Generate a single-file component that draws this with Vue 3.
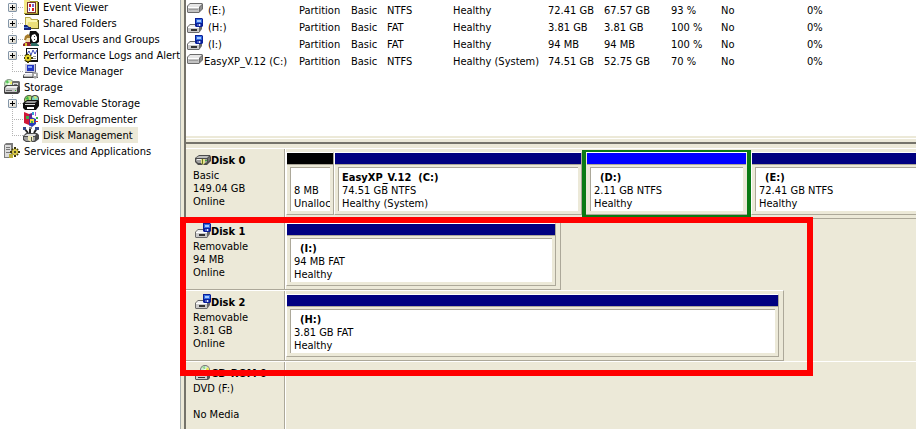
<script setup>
const tree = [
  { label: 'Event Viewer', icon: 'event', level: 1, expand: true },
  { label: 'Shared Folders', icon: 'folder', level: 1, expand: true },
  { label: 'Local Users and Groups', icon: 'users', level: 1, expand: true },
  { label: 'Performance Logs and Alerts', icon: 'perf', level: 1, expand: true },
  { label: 'Device Manager', icon: 'device', level: 1, last: true },
  { label: 'Storage', icon: 'storage', level: 0 },
  { label: 'Removable Storage', icon: 'removable', level: 1, expand: true },
  { label: 'Disk Defragmenter', icon: 'defrag', level: 1 },
  { label: 'Disk Management', icon: 'manage', level: 1, last: true, selected: true },
  { label: 'Services and Applications', icon: 'services', level: 0 },
]

const volumes = [
  { icon: 'drive', name: '(E:)', indent: true, cells: ['Partition', 'Basic', 'NTFS', 'Healthy', '72.41 GB', '67.57 GB', '93 %', 'No', '0%'] },
  { icon: 'usb', name: '(H:)', indent: true, cells: ['Partition', 'Basic', 'FAT', 'Healthy', '3.81 GB', '3.81 GB', '100 %', 'No', '0%'] },
  { icon: 'usb', name: '(I:)', indent: true, cells: ['Partition', 'Basic', 'FAT', 'Healthy', '94 MB', '94 MB', '100 %', 'No', '0%'] },
  { icon: 'drive', name: 'EasyXP_V.12 (C:)', cells: ['Partition', 'Basic', 'NTFS', 'Healthy (System)', '74.51 GB', '52.75 GB', '70 %', 'No', '0%'] },
]

const disks = [
  {
    name: 'Disk 0', icon: 'disk', lines: ['Basic', '149.04 GB', 'Online'],
    parts: [
      { width: 48, kind: 'free', name: '', lines: ['8 MB', 'Unalloc'] },
      { width: 248, name: 'EasyXP_V.12  (C:)', lines: ['74.51 GB NTFS', 'Healthy (System)'] },
      { width: 169, kind: 'logical', name: '(D:)', indent: true, lines: ['2.11 GB NTFS', 'Healthy'] },
      { name: '(E:)', indent: true, lines: ['72.41 GB NTFS', 'Healthy'] },
    ],
  },
  {
    name: 'Disk 1', icon: 'usb', width: 375, lines: ['Removable', '94 MB', 'Online'],
    parts: [{ name: '(I:)', indent: true, lines: ['94 MB FAT', 'Healthy'] }],
  },
  {
    name: 'Disk 2', icon: 'usb', width: 598, lines: ['Removable', '3.81 GB', 'Online'],
    parts: [{ name: '(H:)', indent: true, lines: ['3.81 GB FAT', 'Healthy'] }],
  },
  { name: 'CD-ROM 0', icon: 'cd', lines: ['DVD (F:)', '', 'No Media'], parts: [] },
]

const px = (n) => (n ? { width: n + 'px' } : {})
</script>

<template>
  <div class="console">
    <svg class="defs" aria-hidden="true">
      <symbol id="drive" viewBox="0 0 16 16">
        <path d="M0 5 3 2H15L16 3V8L12 12H1L0 11Z" fill="#6c6c6c" />
        <path d="M1 5 3 3H15L12 6H1Z" fill="#e6e6e6" />
        <path d="M1 6H12V11H1Z" fill="#c2c2c2" />
        <path d="M1 6H12V7H1Z" fill="#fff" />
        <path d="M13 6 15 4V8L13 10Z" fill="#8e8e8e" />
        <path d="M2 8H11V9H2Z" fill="#9c9c9c" />
      </symbol>
      <symbol id="usb" viewBox="0 0 16 16">
        <path d="M0 9 3 6H14L15 7V11L12 15H1L0 14Z" fill="#6a6a6a" />
        <path d="M1 9 3 7H13L12 9Z" fill="#eee" />
        <path d="M1 9H12V14H1Z" fill="#cacaca" />
        <path d="M1 9H12V10H1Z" fill="#fff" />
        <path d="M4 11H10V13H4Z" fill="#333" />
        <path d="M8 0H15L16 1V8L15 9H9L8 8Z" fill="#0a1f98" />
        <path d="M9 1H15V5H9Z" fill="#2f6be0" />
        <path d="M10 2H14V4H10Z" fill="#a4c6ff" />
        <path d="M10 6H14V8H10Z" fill="#4d62c4" />
        <path d="M12 6H13V8H12Z" fill="#dfe6ff" />
      </symbol>
      <symbol id="disk" viewBox="0 0 16 16">
        <path d="M0 6 4 3H15L16 5V9L12 13H3L0 10Z" fill="#4c4c4c" />
        <path d="M1 6 4 4H14L12 6Z" fill="#bdbdbd" />
        <path d="M1 7H12V10L11 11H3L1 9Z" fill="#a0a0a0" />
        <path d="M13 6 15 5V8L13 10Z" fill="#6f6f6f" />
        <path d="M2 7H6V8H2Z" fill="#eee" />
        <path d="M6 7H10V11L8 13L6 11Z" fill="#e5e28a" />
        <path d="M7 7H8V12H7Z" fill="#6a7a20" />
        <path d="M10 8H12V9H10Z" fill="#3da545" />
      </symbol>
      <symbol id="cd" viewBox="0 0 16 16">
        <circle cx="10" cy="5" r="5" fill="#777" />
        <circle cx="10" cy="5" r="4" fill="#d4ecd4" />
        <path d="M10 5 7 2 10 1Z" fill="#8fd98f" />
        <path d="M10 5 13 2 14 5Z" fill="#f0e64a" />
        <circle cx="10" cy="5" r="1" fill="#fff" />
        <path d="M0 9 3 7H14L15 8V13L13 15H1L0 14Z" fill="#555" />
        <path d="M1 10H12V14H1Z" fill="#d0d0d0" />
        <path d="M1 10 3 8H13L12 10Z" fill="#eee" />
        <path d="M3 12H10V13H3Z" fill="#333" />
      </symbol>
      <symbol id="event" viewBox="0 0 16 16">
        <path d="M1 1H6L7 2H15V15H1Z" fill="#a3952a" />
        <path d="M1 1H6L7 3H14V14H1Z" fill="#f3ea86" />
        <path d="M4 3H13V14H4Z" fill="#7a3434" />
        <path d="M5 4H12V13H5Z" fill="#fff" />
        <path d="M6 5H8V8H6Z M9 9H11V12H9Z" fill="#d82020" />
        <path d="M9 5H11V8H9Z M6 9H7V12H6Z" fill="#7a62d0" />
        <path d="M15 3H16V16H2V15H15Z" fill="#2b2810" />
      </symbol>
      <symbol id="folder" viewBox="0 0 16 16">
        <path d="M2 2H7L9 4H15V13H2Z" fill="#b9ac48" />
        <path d="M3 3H7L8 5H14V12H3Z" fill="#fbf6b4" />
        <path d="M5 7H15V13H4Z" fill="#ece07a" />
        <path d="M15 5H16V14H6V13H15Z" fill="#5c5618" />
        <path d="M1 10H4L6 12H8V15H1Z" fill="#16257c" />
        <path d="M1 12H5V13H1Z" fill="#4f86e0" />
      </symbol>
      <symbol id="users" viewBox="0 0 16 16">
        <path d="M7 0H13L16 3V11L13 13H7L6 5Z" fill="#111" />
        <path d="M9 4 12 3 14 6V9L12 11H10L8 7Z" fill="#fff" />
        <path d="M11 5H12V6H11Z M11 8H12V9H11Z" fill="#333" />
        <path d="M2 6 5 5 7 7V11L4 12L2 10Z" fill="#f0dfae" />
        <path d="M2 5 5 3 7 5V7H4L3 9H1Z" fill="#a67c2c" />
        <path d="M0 13 3 11H7L8 15H0Z" fill="#8e2433" />
        <path d="M8 12H13L16 14V15H8Z" fill="#2e6d66" />
        <path d="M2 12H4V15H2Z" fill="#d8c830" />
      </symbol>
      <symbol id="perf" viewBox="0 0 16 16">
        <path d="M3 1H15V15H3Z" fill="#111" />
        <path d="M4 2H14V13H4Z" fill="#fff" />
        <path d="M4 7 6 4 8 8 10 3 12 7 14 3" fill="none" stroke="#3a48b8" />
        <path d="M10 9H13V10H10Z M10 11H13V12H10Z" fill="#999" />
        <path d="M5 7V16M1 11H10M2 8 8 14M8 8 2 14" stroke="#4b4300" stroke-width="2" />
        <circle cx="5" cy="11" r="3" fill="#e6d62c" />
        <path d="M4 10H6V12H4Z" fill="#4b4300" />
      </symbol>
      <symbol id="device" viewBox="0 0 16 16">
        <path d="M2 1H13V10H2Z" fill="#5c5c78" />
        <path d="M2 1H12V9H2Z" fill="#c9c9dc" />
        <path d="M4 2H11V8H4Z" fill="#2236c4" />
        <path d="M5 3H9V5H5Z" fill="#86a6f8" />
        <path d="M1 11H12L15 13V15H0V13Z" fill="#444" />
        <path d="M2 11H11V12L10 13H1V12Z" fill="#e4e4e4" />
        <path d="M1 13H9V14H1Z" fill="#aaa" />
        <path d="M9 10 12 9 15 10V14L12 16L9 13Z" fill="#a6a6a6" />
        <path d="M11 11H13V13H11Z" fill="#fff" />
      </symbol>
      <symbol id="storage" viewBox="0 0 16 16">
        <circle cx="5" cy="5" r="5" fill="#8a9a8a" />
        <circle cx="5" cy="5" r="4" fill="#c8ecc0" />
        <path d="M5 5 1 3 4 1Z" fill="#58c65a" />
        <path d="M5 5 8 2 9 5Z" fill="#f2ee60" />
        <circle cx="5" cy="5" r="1" fill="#fff" />
        <path d="M8 3 9 2H15L16 3V9H8Z" fill="#6c6c6c" />
        <path d="M9 4H14V8H9Z" fill="#dadada" />
        <path d="M10 5H13V6H10Z" fill="#777" />
        <path d="M0 8 2 6H14L16 8V13L14 15H1L0 14Z" fill="#444" />
        <path d="M1 9H13V13H1Z" fill="#c4c4c4" />
        <path d="M1 9 3 7H14L13 9Z" fill="#eee" />
        <path d="M2 11H8V12H2Z" fill="#666" />
        <path d="M11 11H12V12H11Z" fill="#32b432" />
      </symbol>
      <symbol id="removable" viewBox="0 0 16 16">
        <circle cx="6" cy="5" r="5" fill="#4c5c3c" />
        <circle cx="6" cy="5" r="4" fill="#b6dc6a" />
        <circle cx="12" cy="4" r="4" fill="#444" />
        <circle cx="12" cy="4" r="3" fill="#7ed8be" />
        <path d="M6 5 2 4 5 1Z" fill="#38b04b" />
        <path d="M12 4 11 1 14 2Z" fill="#f0ea60" />
        <path d="M0 8 4 5H15L16 6V11L13 15H2L0 13Z" fill="#111" />
        <path d="M4 6H14L12 8H2Z" fill="#999" />
        <path d="M2 9H12V10H2Z" fill="#ddd" />
        <path d="M4 12H11V14H4Z" fill="#fff" />
      </symbol>
      <symbol id="defrag" viewBox="0 0 16 16">
        <path d="M1 1 6 3V14L1 12Z" fill="#d01838" />
        <path d="M6 3 9 2V12L6 15Z" fill="#6a1f8c" />
        <path d="M8 6 13 8V13L9 16L6 14Z" fill="#2a3bb8" />
        <path d="M3 5H6V8H3Z" fill="#3fae49" />
        <path d="M7 8H11V12H7Z" fill="#f0df3c" />
        <path d="M8 10H10V12H8Z" fill="#3fae49" />
        <path d="M9 1H11V4H9Z" fill="#35a0d8" />
        <path d="M12 1H13V5H12Z" fill="#b058c8" />
        <path d="M13 6H15V8H13Z" fill="#3fae49" />
        <path d="M12 10H15V11H12Z" fill="#d02a2a" />
      </symbol>
      <symbol id="manage" viewBox="0 0 16 16">
        <path d="M1 1 5 6M7 1V6M11 6 14 1" stroke="#222" stroke-width="2" />
        <path d="M0 0H3V3H0Z M12 0H16V3H12Z" fill="#33488e" />
        <path d="M6 0H9V2H6Z" fill="#888" />
        <path d="M0 9 3 6H14L16 8V12L12 15H3L0 13Z" fill="#4a4a4a" />
        <path d="M1 9 4 7H13L12 9Z" fill="#ddd" />
        <path d="M1 10H12V13L11 14H3L1 12Z" fill="#a0a0a0" />
        <path d="M5 9H10V13L8 15L5 13Z" fill="#f0ecb8" />
        <path d="M8 10H9V14H8Z" fill="#555" />
      </symbol>
      <symbol id="services" viewBox="0 0 16 16">
        <path d="M0 2 2 0H9V13L7 15H0Z" fill="#7c7c7c" />
        <path d="M1 2H7V14H1Z" fill="#dcdcdc" />
        <path d="M2 4H6V5H2Z M2 6H6V7H2Z M2 9H6V10H2Z" fill="#777" />
        <path d="M11 4V14M6 9H16M8 6 14 12M14 6 8 12" stroke="#3d3604" stroke-width="2" />
        <circle cx="11" cy="9" r="3" fill="#d9ca4a" />
        <circle cx="11" cy="9" r="1" fill="#222" />
        <path d="M5 11H9V15H5Z" fill="#b8ad3c" />
      </symbol>
    </svg>

    <nav class="tree" aria-label="Console tree">
      <ul>
        <li
          v-for="n in tree"
          :key="n.label"
          :class="['node', 'level-' + n.level, { last: n.last, selected: n.selected }]"
        >
          <span v-if="n.level" class="branch">
            <button v-if="n.expand" class="toggle" type="button" :aria-label="'Expand ' + n.label"></button>
          </span>
          <svg class="icon"><use :href="'#' + n.icon" /></svg>
          <span class="caption">{{ n.label }}</span>
        </li>
      </ul>
    </nav>

    <div class="splitter"></div>

    <main class="content">
      <section class="volumes">
        <table>
          <colgroup>
            <col class="c-name" /><col class="c-layout" /><col class="c-type" /><col class="c-fs" />
            <col class="c-status" /><col class="c-cap" /><col class="c-free" /><col class="c-pct" />
            <col class="c-fault" /><col />
          </colgroup>
          <tbody>
            <tr v-for="v in volumes" :key="v.name">
              <td>
                <span :class="['volume', { indent: v.indent }]">
                  <svg class="icon"><use :href="'#' + v.icon" /></svg>{{ v.name }}
                </span>
              </td>
              <td v-for="(c, i) in v.cells" :key="i">{{ c }}</td>
            </tr>
          </tbody>
        </table>
      </section>

      <div class="divider"></div>

      <section class="disks">
        <article
          v-for="d in disks"
          :key="d.name"
          :class="['disk', { wide: !d.width }]"
          :style="px(d.width)"
        >
          <header class="info">
            <h2><svg class="icon"><use :href="'#' + d.icon" /></svg>{{ d.name }}</h2>
            <p v-for="(l, i) in d.lines" :key="i">{{ l }}</p>
          </header>
          <div class="parts">
            <div
              v-for="p in d.parts"
              :key="p.name"
              :class="['part', p.kind, { grow: !p.width }]"
              :style="px(p.width)"
            >
              <div class="bar"></div>
              <div class="body">
                <h3 :class="{ indent: p.indent }">{{ p.name }}</h3>
                <p v-for="l in p.lines" :key="l">{{ l }}</p>
              </div>
            </div>
          </div>
        </article>
        <div class="highlight"></div>
      </section>
    </main>
  </div>
</template>

<style>
body {
  background: #ece9d8;
}
</style>

<style scoped>
.console {
  display: flex;
  height: 100vh;
  overflow: hidden;
  background: #ece9d8;
  color: #000;
  font: 11px/13px "DejaVu Sans Condensed", "DejaVu Sans", sans-serif;
}
.defs {
  position: absolute;
  width: 0;
  height: 0;
}
.icon {
  width: 16px;
  height: 16px;
  flex: none;
}
ul,
h2,
h3,
p {
  margin: 0;
  padding: 0;
  font-size: 11px;
  list-style: none;
}

.tree {
  width: 180px;
  flex: none;
  overflow: hidden;
  background: #fff;
}
.tree ul {
  margin-top: -1px;
}
.node {
  display: flex;
  align-items: center;
  height: 16px;
  padding-left: 4px;
  white-space: nowrap;
}
.level-1 {
  padding-left: 0;
}
.branch {
  display: flex;
  align-items: center;
  width: 23px;
  height: 16px;
  flex: none;
  padding-left: 8px;
  box-sizing: border-box;
  background:
    repeating-linear-gradient(90deg, #b4b4b4 0 1px, transparent 1px 2px) 12px 8px / 11px 1px no-repeat,
    repeating-linear-gradient(#b4b4b4 0 1px, transparent 1px 2px) 12px 0 / 1px 16px no-repeat;
}
.last .branch {
  background:
    repeating-linear-gradient(90deg, #b4b4b4 0 1px, transparent 1px 2px) 12px 8px / 11px 1px no-repeat,
    repeating-linear-gradient(#b4b4b4 0 1px, transparent 1px 2px) 12px 0 / 1px 8px no-repeat;
}
.toggle {
  width: 9px;
  height: 9px;
  padding: 0;
  border: 1px solid #8496a8;
  border-radius: 1px;
  background:
    linear-gradient(#000, #000) center / 5px 1px no-repeat,
    linear-gradient(#000, #000) center / 1px 5px no-repeat,
    linear-gradient(135deg, #fff, #d4d0c4);
}
.caption {
  margin-left: 3px;
  padding: 2px 5px 0 1px;
  line-height: 14px;
}
.level-0 .caption {
  margin-left: 2px;
  padding-left: 2px;
}
.selected .caption {
  background: #ece9d8;
}

.splitter {
  width: 3px;
  flex: none;
  border-left: 1px solid #a9b0b0;
  border-right: 2px solid #75736a;
  background: #ece9d8;
}

.content {
  display: flex;
  flex-direction: column;
  flex: 1;
  min-width: 0;
}
.volumes {
  height: 136px;
  flex: none;
  box-sizing: border-box;
  padding-top: 1px;
  overflow: hidden;
  background: #fff;
}
table {
  width: 100%;
  table-layout: fixed;
  border-collapse: collapse;
}
td {
  box-sizing: border-box;
  height: 17px;
  padding: 2px 0 0;
  white-space: nowrap;
}
.c-name { width: 113px; }
.c-layout { width: 52px; }
.c-type { width: 36px; }
.c-fs { width: 66px; }
.c-status { width: 95px; }
.c-cap { width: 56px; }
.c-free { width: 67px; }
.c-pct { width: 50px; }
.c-fault { width: 86px; }
.volume {
  display: flex;
  align-items: center;
  gap: 1px;
  padding-left: 1px;
}
.volume.indent {
  gap: 5px;
}
.volume .icon {
  margin-top: -3px;
}

.divider {
  height: 4px;
  flex: none;
  border-top: 2px solid #ece9d8;
  border-bottom: 2px solid #75736a;
  background: linear-gradient(#fff 1px, #ece9d8 1px);
}

.disks {
  position: relative;
  flex: 1;
  padding-top: 4px;
}
.disk {
  display: flex;
  box-sizing: border-box;
  height: 71px;
  border: solid;
  border-width: 1px 1px 1px 0;
  border-color: #fff #aca899 #aca899;
}
.disk.wide {
  margin-right: -8px;
}
.info {
  width: 99px;
  flex: none;
  box-sizing: border-box;
  padding: 3px 0 0 7px;
  border-right: 1px solid #aca899;
  white-space: nowrap;
}
.info h2 {
  display: flex;
  align-items: center;
  height: 17px;
  padding-left: 2px;
}
.info h2 .icon {
  align-self: flex-start;
}
.info p {
  height: 13px;
}
.parts {
  display: flex;
  flex: 1;
  min-width: 0;
  padding: 3px 4px 3px 0;
  border-left: 1px solid #fff;
}
.wide .parts {
  padding-right: 0;
}
.part {
  position: relative;
  display: flex;
  flex-direction: column;
  flex: none;
  box-sizing: border-box;
  border: 1px solid;
  border-color: #fff #aca899 #aca899 #fff;
}
.part.grow {
  flex: 1;
  min-width: 0;
}
.bar {
  height: 11px;
  border-bottom: 1px solid #aca899;
  background: #000080;
}
.free .bar {
  background: #000;
}
.body {
  flex: 1;
  min-width: 0;
  margin: 2px 3px 3px;
  padding: 3px 0 0 3px;
  overflow: hidden;
  border: solid #aca899;
  border-width: 1px 0 0 1px;
  background: #fff;
  white-space: pre;
}
.body h3 {
  height: 13px;
}
.body h3.indent {
  padding-left: 6px;
}
.logical {
  padding: 0 4px 0 4px;
}
.logical .bar {
  background: #0000ff;
}
.logical::after {
  content: "";
  position: absolute;
  inset: -3px -1px;
  border: solid #0a7a14;
  border-width: 2px 4px;
}

/* Marker around the removable disks */
.highlight {
  position: absolute;
  top: 73px;
  left: -6px;
  width: 633px;
  height: 159px;
  box-sizing: border-box;
  border: 6px solid #ff0000;
}
</style>
